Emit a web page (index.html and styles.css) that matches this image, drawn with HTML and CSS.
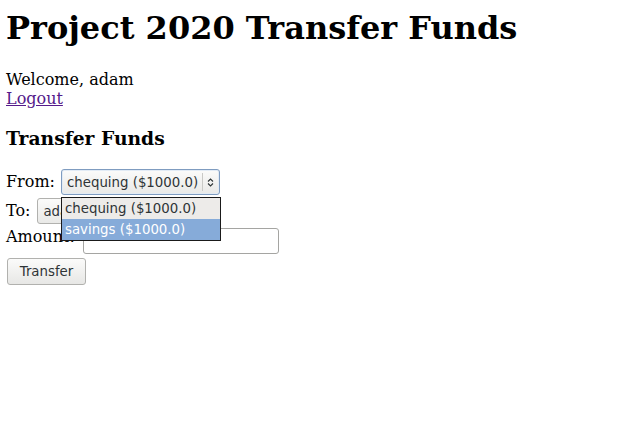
FILE: index.html
```html
<!DOCTYPE html>
<html>
<head>
<meta charset="utf-8">
<title>Project 2020 Transfer Funds</title>
<link rel="stylesheet" href="styles.css">
</head>
<body>
<h1 class="title">Project 2020 Transfer Funds</h1>
<div class="welcome">Welcome, adam</div>
<a class="logout" href="#">Logout</a>
<h3 class="subtitle">Transfer Funds</h3>
<form class="form">
  <div class="row">
    <span class="label label-from">From:</span>
    <div class="select-wrap">
      <div class="select focused">
        <span class="select-text">chequing ($1000.0)</span>
        <span class="select-sep"></span>
        <svg class="select-arrow" width="7" height="9" viewBox="0 0 7 9"><path d="M1 3.5 L3.5 1 L6 3.5 M1 5.5 L3.5 8 L6 5.5" fill="none" stroke="#2e3436" stroke-width="1.1"/></svg>
      </div>
      <ul class="dropdown">
        <li class="option">chequing ($1000.0)</li>
        <li class="option selected">savings ($1000.0)</li>
      </ul>
    </div>
  </div>
  <div class="row">
    <span class="label">To:</span>
    <div class="select to-select">
      <span class="select-text">adam savings</span>
    </div>
  </div>
  <div class="row row-amount">
    <span class="label label-amount">Amount:</span>
    <div class="input"></div>
  </div>
  <div class="row row-btn">
    <div class="button">Transfer</div>
  </div>
</form>
</body>
</html>
```
FILE: styles.css
```css
html, body {
  margin: 0;
  padding: 0;
  background: #ffffff;
}
body {
  padding: 10px 7px 0 7px;
  font-family: "DejaVu Serif", serif;
  font-size: 16px;
  color: #000000;
}
.title {
  font-size: 32px;
  font-weight: bold;
  margin: 0 0 23px -1px;
  line-height: 37px;
}
.welcome {
  line-height: 19px;
  margin-left: -1px;
}
.logout {
  display: block;
  width: max-content;
  line-height: 19px;
  color: #551a8b;
  text-decoration: underline;
  margin-left: -1px;
}
.subtitle {
  font-size: 18.72px;
  font-weight: bold;
  margin: 19px 0 20px -1px;
  line-height: 22px;
}
.form {
  margin: 0;
}
.row {
  display: flex;
  align-items: baseline;
  height: 29px;
}
.row-amount {
  height: 30px;
}
.label {
  margin-left: -1px;
  margin-right: 7px;
  line-height: 19px;
}
.label-from {
  margin-right: 6px;
}
.label-amount {
  margin-right: 8px;
}
.select-wrap {
  position: relative;
}
.select {
  box-sizing: border-box;
  height: 26px;
  display: flex;
  align-items: center;
  border: 1px solid #b1b1ae;
  border-radius: 3px;
  background: linear-gradient(#fbfbfa, #e9e9e7);
  font-family: "DejaVu Sans", sans-serif;
  font-size: 13.33px;
  color: #2e3436;
  padding: 0 0 0 5px;
}
.select.focused {
  width: 159px;
  border-color: #7f9cc0;
  box-shadow: inset 0 0 0 1px #e2ebf5;
}
.select-text {
  white-space: nowrap;
  flex-shrink: 0;
}
.select-sep {
  flex-shrink: 0;
  width: 1px;
  height: 18px;
  background: #c9c9c6;
  margin-left: 4px;
}
.select-arrow {
  flex-shrink: 0;
  margin-left: 4px;
}
.to-select {
  width: 120px;
  overflow: hidden;
}
.dropdown {
  position: absolute;
  left: 0;
  top: 28px;
  width: 160px;
  margin: 0;
  padding: 0;
  list-style: none;
  box-sizing: border-box;
  border: 1px solid #1a1a1a;
  background: #edebe9;
  font-family: "DejaVu Sans", sans-serif;
  font-size: 13.33px;
  color: #2e3436;
  z-index: 2;
}
.option {
  height: 21px;
  line-height: 21px;
  padding-left: 3px;
  white-space: nowrap;
}
.option.selected {
  background: #86abd9;
  color: #ffffff;
}
.input {
  box-sizing: border-box;
  width: 196px;
  height: 26px;
  border: 1px solid #a5a5a2;
  border-radius: 3px;
  background: #ffffff;
  align-self: flex-start;
  margin-top: 1px;
}
.row-btn {
  align-items: flex-start;
}
.button {
  box-sizing: border-box;
  width: 79px;
  height: 27px;
  margin-top: 1px;
  border: 1px solid #b1b1ae;
  border-radius: 3px;
  background: linear-gradient(#fbfbfa, #e7e7e5);
  font-family: "DejaVu Sans", sans-serif;
  font-size: 13.33px;
  color: #2e3436;
  display: flex;
  align-items: center;
  justify-content: center;
}
```
